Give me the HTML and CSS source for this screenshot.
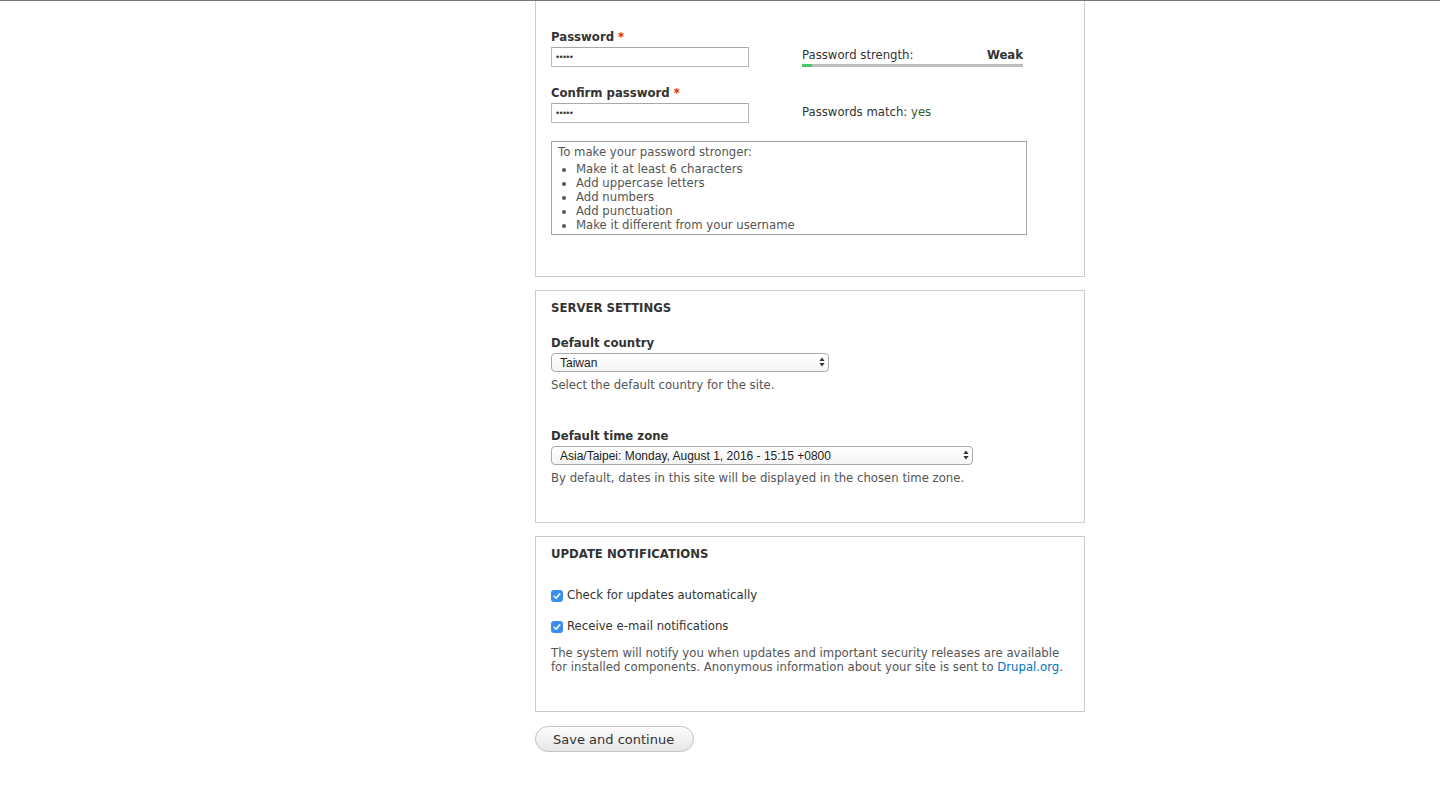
FILE: index.html
```html
<!DOCTYPE html>
<html lang="en">
<head>
    <meta charset="UTF-8">
    <title>Configure site | Drupal</title>
    <link rel="stylesheet" href="styles.css">
</head>
<body>
    <div id="page">
        <form id="install-form">
            <!-- account password (top of fieldset is scrolled out of view) -->
            <div class="fieldset fieldset-first">
                <div class="pw-row">
                    <div class="pw-field">
                        <label class="form-label">Password <span class="required">*</span></label>
                        <input type="password" class="form-text" value="admin">
                    </div>
                    <div class="pw-strength">
                        <div class="pw-strength-title">
                            <span>Password strength:</span>
                            <span class="bold">Weak</span>
                        </div>
                        <div class="pw-bar"><div class="pw-bar-fill" style="width: 10px"></div></div>
                    </div>
                </div>
                <div class="pw-row">
                    <div class="pw-field">
                        <label class="form-label">Confirm password <span class="required">*</span></label>
                        <input type="password" class="form-text" value="admin">
                    </div>
                    <div class="pw-match">Passwords match: <span class="ok">yes</span></div>
                </div>
                <div class="pw-suggestions">
                    To make your password stronger:
                    <ul>
                        <li>Make it at least 6 characters</li>
                        <li>Add uppercase letters</li>
                        <li>Add numbers</li>
                        <li>Add punctuation</li>
                        <li>Make it different from your username</li>
                    </ul>
                </div>
            </div>

            <div class="fieldset">
                <div class="legend">Server settings</div>
                <div class="form-item">
                    <label class="form-label">Default country</label>
                    <div class="select-wrap select-country">
                        <select class="form-select">
                            <option>Taiwan</option>
                        </select>
                        <svg class="select-arrow" width="6" height="10" viewBox="0 0 6 10"><path d="M3 0.5 L5.6 4 H0.4 Z M3 9.5 L5.6 6 H0.4 Z" fill="#333"/></svg>
                    </div>
                    <div class="description">Select the default country for the site.</div>
                </div>
                <div class="form-item form-item-tz">
                    <label class="form-label">Default time zone</label>
                    <div class="select-wrap select-tz">
                        <select class="form-select">
                            <option>Asia/Taipei: Monday, August 1, 2016 - 15:15 +0800</option>
                        </select>
                        <svg class="select-arrow" width="6" height="10" viewBox="0 0 6 10"><path d="M3 0.5 L5.6 4 H0.4 Z M3 9.5 L5.6 6 H0.4 Z" fill="#333"/></svg>
                    </div>
                    <div class="description">By default, dates in this site will be displayed in the chosen time zone.</div>
                </div>
            </div>

            <div class="fieldset">
                <div class="legend">Update notifications</div>
                <div class="checks">
                    <label class="check">
                        <span class="checkbox"><svg width="12" height="12" viewBox="0 0 12 12"><path d="M3.2 6.3 L5.1 8.2 L8.8 3.8" fill="none" stroke="#fff" stroke-width="1.6" stroke-linecap="round" stroke-linejoin="round"/></svg></span>
                        Check for updates automatically
                    </label>
                    <label class="check">
                        <span class="checkbox"><svg width="12" height="12" viewBox="0 0 12 12"><path d="M3.2 6.3 L5.1 8.2 L8.8 3.8" fill="none" stroke="#fff" stroke-width="1.6" stroke-linecap="round" stroke-linejoin="round"/></svg></span>
                        Receive e-mail notifications
                    </label>
                </div>
                <div class="description">
                    The system will notify you when updates and important security releases are available
                    for installed components. Anonymous information about your site is sent to <a href="">Drupal.org</a>.
                </div>
            </div>

            <button type="button" class="button">Save and continue</button>
        </form>
    </div>
</body>
</html>
```

FILE: styles.css
```css
:root{
    --border-color: #ccc;
    --text-color: #333;
    --muted-color: #555;
    --link-color: #0074bd;
}
html,body{
    margin: 0;
    padding: 0;
    background: #fff;
    color: var(--text-color);
    font-family: "DejaVu Sans", Verdana, sans-serif;
    font-size: 11.7px;
}
#page{
    border-top: 1px solid #777;
    min-height: 805px;
}
#install-form{
    width: 550px;
    margin-left: 535px;
}

/* ===========
    Helpers
   =========== */
.bold{
    font-weight: bold;
}
.required{
    color: #e32700;
}

/* ===========
    Fieldsets
   =========== */
.fieldset{
    border: 1px solid var(--border-color);
    padding: 9px 15px 37px;
    margin-bottom: 13px;
}
.fieldset-first{
    border-top: 0;
    padding-top: 28px;
    padding-bottom: 41px;
}
.legend{
    font-weight: bold;
    text-transform: uppercase;
    line-height: 16px;
}
.form-label{
    display: block;
    font-weight: bold;
    line-height: 16px;
    margin-bottom: 2px;
}
.description{
    color: var(--muted-color);
    line-height: 14px;
}
.description a{
    color: var(--link-color);
    text-decoration: none;
}

/* ===========
    Password
   =========== */
.pw-row{
    display: flex;
    align-items: flex-end;
    margin-bottom: 18px;
}
.pw-field{
    width: 251px;
}
.form-text{
    display: block;
    box-sizing: border-box;
    width: 198px;
    height: 20px;
    margin: 0;
    padding: 0 4px;
    border: 1px solid #b8b8b8;
    border-top-color: #a8a8a8;
    font-family: "Liberation Sans", sans-serif;
    font-size: 9px;
    letter-spacing: 0.3px;
    color: #333;
}
.pw-strength{
    width: 221px;
}
.pw-strength-title{
    display: flex;
    justify-content: space-between;
    line-height: 16px;
    margin-bottom: 1px;
}
.pw-bar{
    height: 3px;
    background: #bdbdbd;
}
.pw-bar-fill{
    height: 100%;
    background: #47c965;
}
.pw-match{
    line-height: 16px;
    margin-bottom: 3px;
}
.pw-match .ok{
    color: #325e1c;
}
.pw-suggestions{
    box-sizing: border-box;
    width: 476px;
    border: 1px solid #a5a5a5;
    padding: 3px 6px 2px;
    line-height: 14px;
    color: var(--muted-color);
}
.pw-suggestions ul{
    margin: 3px 0 0;
    padding-left: 18px;
}

/* ===========
    Selects
   =========== */
.form-item{
    margin-top: 19px;
}
.form-item-tz{
    margin-top: 36px;
}
.select-wrap{
    position: relative;
    margin-bottom: 6px;
}
.select-country{
    width: 278px;
}
.select-tz{
    width: 422px;
}
.form-select{
    appearance: none;
    -webkit-appearance: none;
    display: block;
    box-sizing: border-box;
    width: 100%;
    height: 19px;
    margin: 0;
    padding: 0 8px;
    border: 1px solid #aaa;
    border-radius: 4px;
    background: linear-gradient(#fff, #f4f4f4);
    font-family: "Liberation Sans", Arial, sans-serif;
    font-size: 12px;
    color: #222;
}
.select-arrow{
    position: absolute;
    right: 4px;
    top: 4px;
}

/* ===========
    Checkboxes
   =========== */
.checks{
    margin-top: 26px;
    margin-bottom: 13px;
}
.check{
    display: flex;
    align-items: center;
    gap: 4px;
    line-height: 14px;
}
.check + .check{
    margin-top: 17px;
}
.checkbox{
    display: inline-flex;
    width: 12px;
    height: 12px;
    border-radius: 3px;
    background: #3b8ef0;
    margin-top: 1px;
}

/* ===========
    Button
   =========== */
.button{
    width: 159px;
    height: 26px;
    margin-top: 1px;
    padding: 0;
    border: 1px solid #c4c4c4;
    border-radius: 13px;
    background: linear-gradient(#fdfdfd, #e6e6e6);
    font-family: "DejaVu Sans", Verdana, sans-serif;
    font-size: 13px;
    color: #333;
    text-align: left;
    padding-left: 17px;
    box-sizing: border-box;
}
```
